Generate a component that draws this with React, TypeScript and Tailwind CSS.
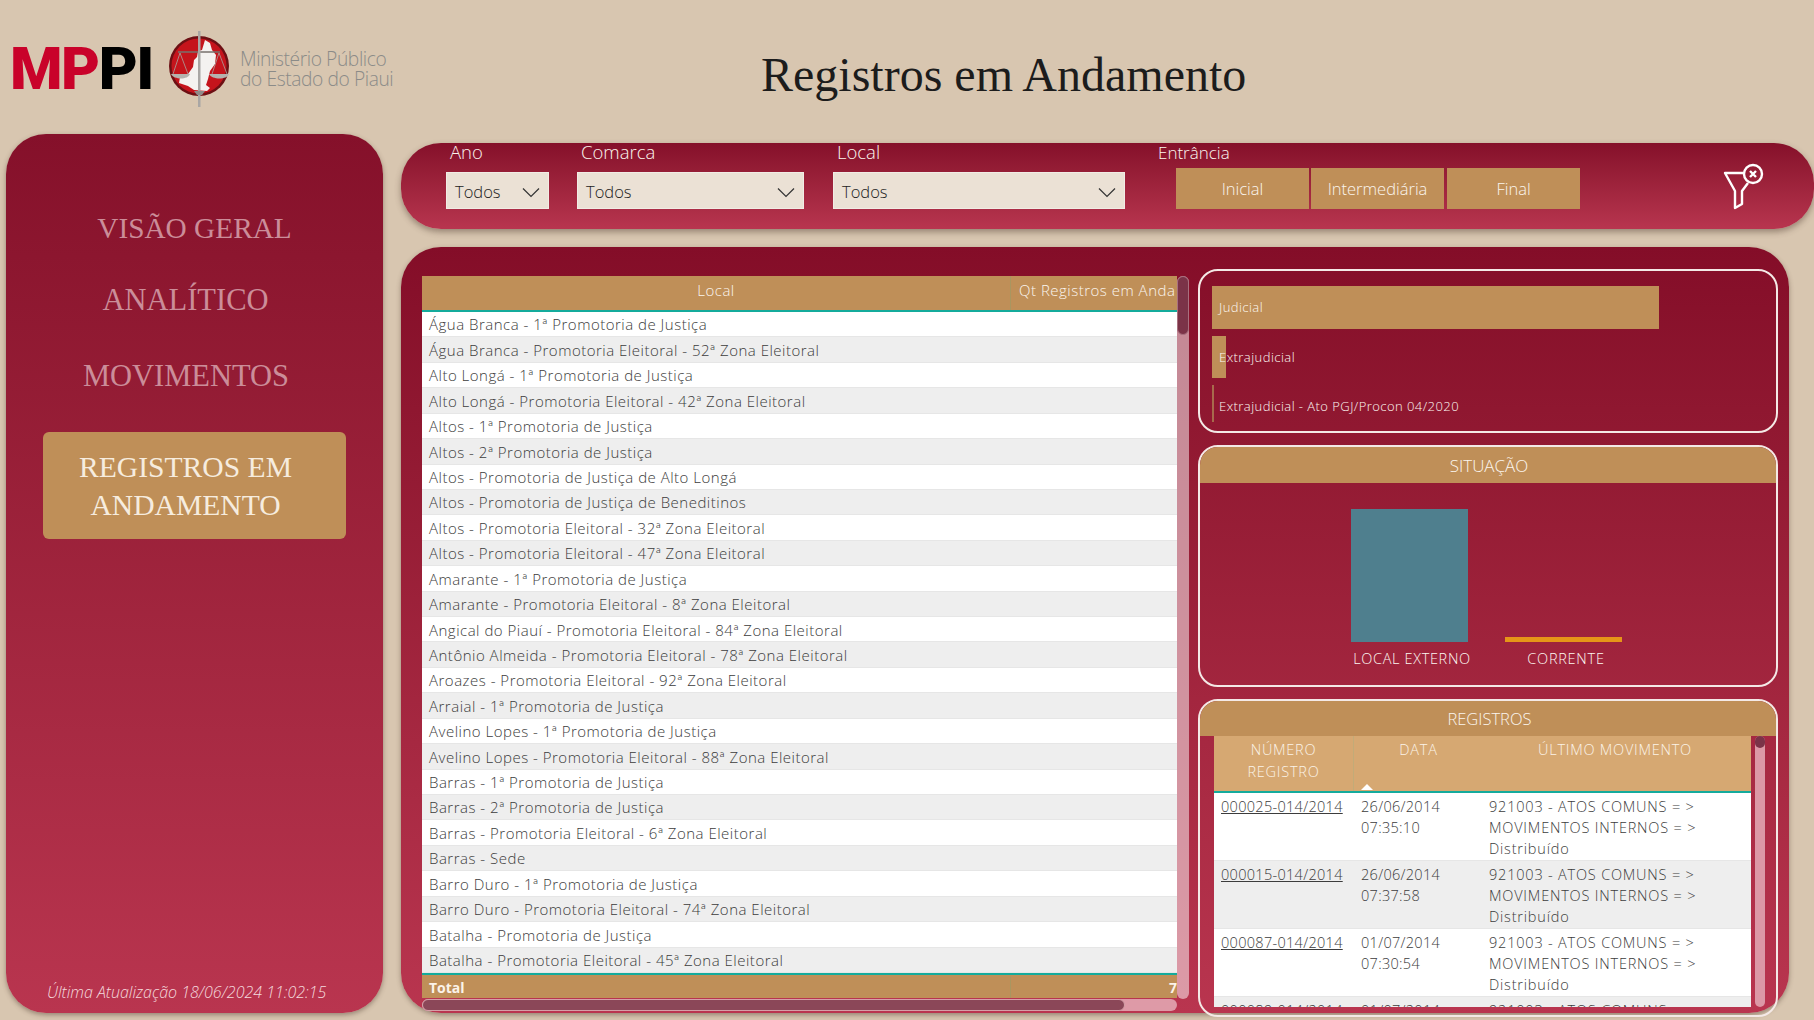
const body = { fontFamily: '"Open Sans", "Noto Sans", sans-serif' };
const serif = { fontFamily: '"Liberation Serif", serif' };

const locais = [
  "Água Branca - 1ª Promotoria de Justiça",
  "Água Branca - Promotoria Eleitoral - 52ª Zona Eleitoral",
  "Alto Longá - 1ª Promotoria de Justiça",
  "Alto Longá - Promotoria Eleitoral - 42ª Zona Eleitoral",
  "Altos - 1ª Promotoria de Justiça",
  "Altos - 2ª Promotoria de Justiça",
  "Altos - Promotoria de Justiça de Alto Longá",
  "Altos - Promotoria de Justiça de Beneditinos",
  "Altos - Promotoria Eleitoral - 32ª Zona Eleitoral",
  "Altos - Promotoria Eleitoral - 47ª Zona Eleitoral",
  "Amarante - 1ª Promotoria de Justiça",
  "Amarante - Promotoria Eleitoral - 8ª Zona Eleitoral",
  "Angical do Piauí - Promotoria Eleitoral - 84ª Zona Eleitoral",
  "Antônio Almeida - Promotoria Eleitoral - 78ª Zona Eleitoral",
  "Aroazes - Promotoria Eleitoral - 92ª Zona Eleitoral",
  "Arraial - 1ª Promotoria de Justiça",
  "Avelino Lopes - 1ª Promotoria de Justiça",
  "Avelino Lopes - Promotoria Eleitoral - 88ª Zona Eleitoral",
  "Barras - 1ª Promotoria de Justiça",
  "Barras - 2ª Promotoria de Justiça",
  "Barras - Promotoria Eleitoral - 6ª Zona Eleitoral",
  "Barras - Sede",
  "Barro Duro - 1ª Promotoria de Justiça",
  "Barro Duro - Promotoria Eleitoral - 74ª Zona Eleitoral",
  "Batalha - Promotoria de Justiça",
  "Batalha - Promotoria Eleitoral - 45ª Zona Eleitoral",
];

const registros = [
  { num: "000025-014/2014", data: "26/06/2014", hora: "07:35:10" },
  { num: "000015-014/2014", data: "26/06/2014", hora: "07:37:58" },
  { num: "000087-014/2014", data: "01/07/2014", hora: "07:30:54" },
  { num: "000089-014/2014", data: "01/07/2014", hora: "07:32:11" },
];

function Emblem() {
  return (
    <svg width="70" height="80" viewBox="0 0 70 80" className="shrink-0">
      <circle cx="35" cy="37" r="30" fill="#6d1014" />
      <circle cx="35" cy="37" r="27.5" fill="#c5141c" />
      <path d="M41 11l5 3 2 7 4 5-1 9-5 7-2 8-2 6 4 3-3 3-13-1-6-4-9-3 1-6 8-3 5-7 1-7 3-3 1-6 4-1z" fill="#f4f2f0" />
      <path d="M14 23h42" stroke="#77706c" strokeWidth="1.5" />
      <path d="M16 24l-7 21M16 24l8 21M55 24l-7 21M55 24l8 21" stroke="#a8a4a0" strokeWidth="0.8" fill="none" />
      <path d="M7 45h19c-2 6-16 6-19 0zM45 45h20c-2 6-17 6-20 0z" fill="#b5b2ae" />
      <path d="M34 2h2.5v76H34z" fill="#a9a6a4" />
      <path d="M30 62h11l-3 4h-5z" fill="#8f8c8a" />
    </svg>
  );
}

function Logo() {
  return (
    <div className="flex items-center ml-[10px] mt-[4px] w-[751px] shrink-0">
      <div className="flex w-[142px] text-[60px] font-black leading-none tracking-[-1.5px]" style={{ fontFamily: 'Roboto, sans-serif' }}>
        <span className="text-[#c9022a]">MP</span>
        <span className="text-black">PI</span>
      </div>
      <div className="ml-[12px]">
        <Emblem />
      </div>
      <div className="ml-[6px] text-[19.2px] leading-[20px] text-[#8b8b88] font-light tracking-[-0.4px]" style={body}>
        <div>Ministério Público</div>
        <div>do Estado do Piaui</div>
      </div>
    </div>
  );
}

function Dropdown({ label, width, gap }: { label: string; width: string; gap: string }) {
  return (
    <div className={`flex flex-col shrink-0 ${width} ${gap}`}>
      <div className="h-[29px] pl-[4px] text-[18.5px] font-light leading-[17px] text-[#fbf5ee]" style={body}>
        {label}
      </div>
      <div className="flex h-[37px] items-center justify-between border border-[#f1ece5] bg-[#ebe1d5] pl-[8px] pr-[8px] text-[16.5px] font-light text-[#222]">
        <span className="pt-[4px]" style={body}>Todos</span>
        <svg width="18" height="11" viewBox="0 0 18 11" fill="none" className="mt-[3px]">
          <path d="M1 1.5l8 8 8-8" stroke="#333" strokeWidth="1.2" />
        </svg>
      </div>
    </div>
  );
}

function ClearFilter() {
  return (
    <svg width="44" height="50" viewBox="0 0 44 50" fill="none" className="ml-[142px] mt-[19px] shrink-0">
      <path d="M22 11H3l10 18v17l7-4V29l6-8" stroke="#fff" strokeWidth="2.4" strokeLinejoin="round" />
      <circle cx="31" cy="12" r="9" stroke="#fff" strokeWidth="2.4" />
      <path d="M28 9l6 6M34 9l-6 6" stroke="#fff" strokeWidth="2.4" />
    </svg>
  );
}

function FilterBar() {
  return (
    <div className="mt-[9px] flex h-[86px] shrink-0 rounded-[40px] bg-gradient-to-b from-[#85102a] to-[#b8354f] pl-[45px] shadow-[0_3px_6px_rgba(70,50,40,0.45)]" style={body}>
      <Dropdown label="Ano" width="w-[103px]" gap="mr-[28px]" />
      <Dropdown label="Comarca" width="w-[227px]" gap="mr-[29px]" />
      <Dropdown label="Local" width="w-[292px]" gap="mr-[33px]" />
      <div className="flex flex-col shrink-0">
        <div className="h-[25px] text-[17px] font-light leading-[19px] text-[#fbf5ee]">Entrância</div>
        <div className="ml-[18px] flex gap-[2px] text-[16.5px] font-light text-[#fbf5ee]">
          <div className="flex h-[41px] w-[133px] items-center justify-center bg-[#bf8f58] pt-[2px]">Inicial</div>
          <div className="flex h-[41px] w-[133px] items-center justify-center bg-[#bf8f58] pt-[2px]">Intermediária</div>
          <div className="ml-[1px] flex h-[41px] w-[133px] items-center justify-center bg-[#bf8f58] pt-[2px]">Final</div>
        </div>
      </div>
      <ClearFilter />
    </div>
  );
}

function Sidebar() {
  return (
    <aside className="ml-[6px] mb-[7px] flex w-[377px] shrink-0 flex-col rounded-[40px] bg-gradient-to-b from-[#85102a] to-[#b9354f] shadow-[0_2px_5px_rgba(70,50,40,0.45)]">
      <div className="flex flex-col items-center pt-[75px] text-[#cb8d99] text-[29.3px] leading-[38px]" style={serif}>
        <div className="h-[72px]">VISÃO GERAL</div>
        <div className="ml-[-18px] h-[76px] text-[30.5px]">ANALÍTICO</div>
        <div className="ml-[-17px] h-[75px] text-[30.5px]">MOVIMENTOS</div>
      </div>
      <div className="mx-[37px] flex h-[107px] flex-col items-center justify-center rounded-[6px] bg-[#bf8f58] pr-[18px] text-center text-[29.6px] leading-[38px] text-[#f6ecdf]" style={serif}>
        <div>REGISTROS EM</div>
        <div>ANDAMENTO</div>
      </div>
      <div className="mt-auto pb-[10px] pl-[41px] text-[16px] font-light italic leading-[22px] text-[#f4d9dd]" style={body}>
        Última Atualização 18/06/2024 11:02:15
      </div>
    </aside>
  );
}

function LocaisTable() {
  return (
    <div className="flex w-[767px] shrink-0 pt-[29px]">
      <div className="flex w-[755px] shrink-0 flex-col">
        <div className="flex h-[722px] flex-col overflow-hidden">
          <div className="flex h-[36px] shrink-0 border-b-2 border-[#14ab9c] bg-[#bf8f58] text-[15px] font-light tracking-[0.5px] text-[#fbf5ee]">
            <div className="flex w-[589px] items-center justify-center border-r border-[#a99660] pb-[6px]">Local</div>
            <div className="flex flex-1 items-center overflow-hidden whitespace-nowrap pb-[6px] pl-[8px]">Qt Registros em Anda</div>
          </div>
          <div className="flex h-[661px] shrink-0 flex-col">
            {locais.map((l, i) => (
              <div key={l} className={`flex flex-1 items-center border-b border-[#e6e6e6] pl-[7px] pt-[1px] text-[15px] font-light tracking-[0.5px] text-[#3c3c3c] ${i % 2 ? "bg-[#eeeeee]" : "bg-white"}`}>
                {l}
              </div>
            ))}
          </div>
          <div className="flex h-[25px] shrink-0 border-t-2 border-[#14ab9c] bg-[#bf8f58] pt-[1px] text-[14px] font-bold text-[#fbf3ea]">
            <div className="flex w-[589px] items-center border-r border-[#a99660] pl-[7px]">Total</div>
            <div className="flex flex-1 items-center justify-end">7</div>
          </div>
        </div>
        <div className="mt-[1px] flex h-[12px] rounded-full bg-[#de9aa7]">
          <div className="h-full w-[703px] rounded-full border border-[#d5a0a8] bg-[#8b4758]" />
        </div>
      </div>
      <div className="h-[723px] w-[12px] shrink-0 rounded-full bg-white/50">
        <div className="h-[59px] rounded-full border border-[#a8707f] bg-[#7b3348]" />
      </div>
    </div>
  );
}

function TipoCard() {
  return (
    <div className="flex h-[164px] shrink-0 flex-col rounded-[20px] border-2 border-[#f4e9e6] pl-[12px] pt-[15px] text-[13px] font-light tracking-[0.45px] text-[#fdf8f2]">
      <div className="flex h-[43px] w-[447px] items-center bg-[#bf8f58] pl-[7px]">Judicial</div>
      <div className="relative mt-[7px] flex h-[42px] items-center">
        <div className="h-full w-[14px] bg-[#bf8f58]" />
        <span className="absolute left-[7px] top-[12px]">Extrajudicial</span>
      </div>
      <div className="relative mt-[7px] flex h-[37px] items-center">
        <div className="h-full w-[2px] bg-[#a86a4c]" />
        <span className="absolute left-[7px] top-[12px]">Extrajudicial - Ato PGJ/Procon 04/2020</span>
      </div>
    </div>
  );
}

function SituacaoCard() {
  return (
    <div className="flex h-[242px] shrink-0 flex-col overflow-hidden rounded-[20px] border-2 border-[#f4e9e6]">
      <div className="flex h-[36px] shrink-0 items-center justify-center bg-[#bf8f58] pl-[2px] pt-[1px] text-[17px] font-light text-[#fbf5ee]">SITUAÇÃO</div>
      <div className="flex flex-1 pl-[150px]">
        <div className="flex w-[118px] flex-col items-center">
          <div className="mt-[26px] h-[133px] w-[117px] bg-[#4f7f8e]" />
          <div className="ml-[6px] mt-[6px] whitespace-nowrap text-[14.5px] font-light tracking-[0.65px] text-[#fdf8f2]">LOCAL EXTERNO</div>
        </div>
        <div className="ml-[36px] flex w-[118px] flex-col items-center">
          <div className="mt-[154px] h-[5px] w-[117px] bg-[#e69518]" />
          <div className="ml-[6px] mt-[6px] whitespace-nowrap text-[14.5px] font-light tracking-[0.75px] text-[#fdf8f2]">CORRENTE</div>
        </div>
      </div>
    </div>
  );
}

function RegistrosCard() {
  return (
    <div className="flex h-[318px] shrink-0 flex-col overflow-hidden rounded-[20px] border-2 border-[#f4e9e6]">
      <div className="flex h-[35px] shrink-0 items-center justify-center bg-[#bf8f58] pl-[3px] pt-[2px] text-[16.5px] font-light text-[#fbf5ee]">REGISTROS</div>
      <div className="flex pl-[14px]">
        <div className="h-[271px] w-[537px] shrink-0 overflow-hidden">
          <div className="flex h-[57px] border-b-2 border-[#14ab9c] bg-[#d6a872] text-[14.5px] font-light leading-[22px] tracking-[0.75px] text-[#fbf3e8]">
            <div className="w-[140px] border-r border-[#c2ab78] pt-[3px] text-center">
              <div>NÚMERO</div>
              <div>REGISTRO</div>
            </div>
            <div className="relative w-[129px] pt-[3px] text-center">
              DATA
              <svg width="12" height="6" viewBox="0 0 12 6" className="absolute bottom-[1px] left-[7px]">
                <path d="M6 0l6 6H0z" fill="#fff" />
              </svg>
            </div>
            <div className="flex-1 pr-[4px] pt-[3px] text-center">ÚLTIMO MOVIMENTO</div>
          </div>
          {registros.map((r, i) => (
            <div key={r.num} className={`flex h-[68px] border-b border-[#e6e6e6] pt-[3px] text-[14.5px] font-light leading-[21px] text-[#3c3c3c] ${i % 2 ? "bg-[#eeeeee]" : "bg-white"}`}>
              <div className="w-[140px] pl-[7px] tracking-[0.3px] underline">{r.num}</div>
              <div className="w-[129px] pl-[7px] tracking-[0.3px]">
                <div>{r.data}</div>
                <div>{r.hora}</div>
              </div>
              <div className="flex-1 pl-[6px] tracking-[0.8px]">
                <div>921003 - ATOS COMUNS = &gt;</div>
                <div>MOVIMENTOS INTERNOS = &gt;</div>
                <div>Distribuído</div>
              </div>
            </div>
          ))}
        </div>
        <div className="ml-[4px] h-[271px] w-[10px] rounded-full bg-[#dc98a6]">
          <div className="h-[12px] rounded-full bg-[#7b3348]" />
        </div>
      </div>
    </div>
  );
}

export default function App() {
  return (
    <div className="flex h-[1020px] w-full flex-col overflow-hidden bg-[#d8c6b0]" style={body}>
      <header className="flex h-[134px] shrink-0 items-center">
        <Logo />
        <h1 className="text-[48px] leading-none text-[#1c1c1c] mt-[16px]" style={serif}>Registros em Andamento</h1>
      </header>
      <div className="flex min-h-0 flex-1">
        <Sidebar />
        <div className="ml-[18px] flex min-w-0 flex-1 flex-col">
          <FilterBar />
          <main className="mt-[18px] flex h-[766px] w-[1388px] shrink-0 rounded-[40px] bg-gradient-to-b from-[#840d28] to-[#b9354f] pl-[21px] shadow-[0_2px_5px_rgba(70,50,40,0.45)]">
            <LocaisTable />
            <div className="ml-[9px] flex w-[580px] shrink-0 flex-col gap-[12px] pt-[22px]">
              <TipoCard />
              <SituacaoCard />
              <RegistrosCard />
            </div>
          </main>
        </div>
      </div>
    </div>
  );
}
